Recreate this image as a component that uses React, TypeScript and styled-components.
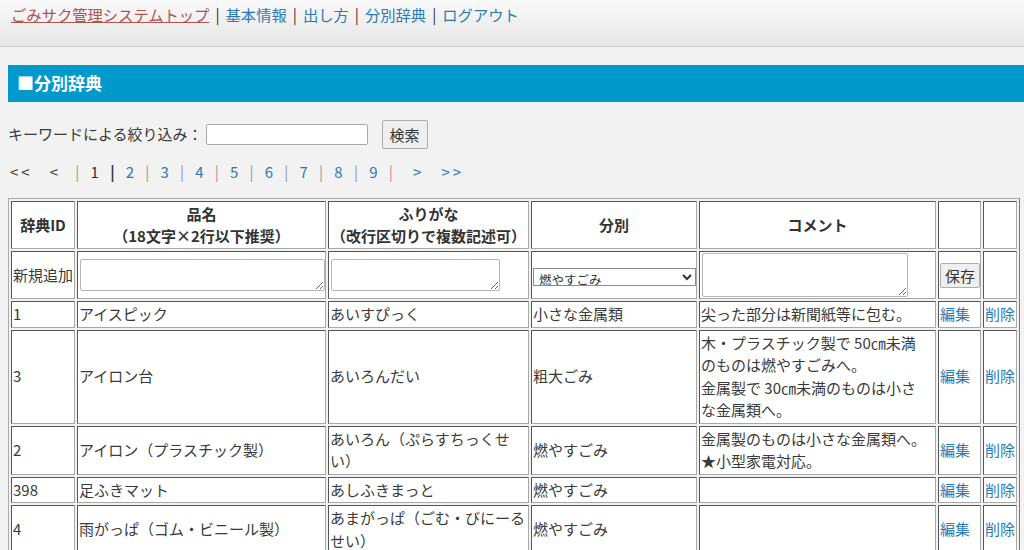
import React from "react";
import styled, { createGlobalStyle } from "styled-components";

const GlobalStyle = createGlobalStyle`
  html, body {
    margin: 0;
    padding: 0;
    overflow: hidden;
    background-color: #f2f2f2;
  }
  body {
    font-family: "Noto Sans CJK JP", "Noto Sans", sans-serif;
    font-size: 15px;
    line-height: 22.5px;
    color: #3a3a3a;
  }
`;

const LINK = "#2a7ab8";

const NavBar = styled.nav`
  height: 47px;
  box-sizing: border-box;
  padding: 3px 0 0 11px;
  background: linear-gradient(#f9f9f9, #e6e6e6);
  border-bottom: 1px solid #cfcfcf;
  display: flex;
  align-items: flex-start;
  font-size: 15.3px;
`;

const NavLink = styled.a<{ $top?: boolean }>`
  color: ${({ $top }) => ($top ? "#b0524e" : LINK)};
  text-decoration: ${({ $top }) => ($top ? "underline" : "none")};
  cursor: pointer;
`;

const NavSep = styled.span`
  margin: 0 6px;
  color: #333;
`;

const Main = styled.main`
  padding-left: 8px;
`;

const Heading = styled.h2`
  margin: 18px 0 0;
  height: 37px;
  padding-left: 9px;
  display: flex;
  align-items: center;
  background-color: #0099cc;
  color: #fff;
  font-size: 17px;
  font-weight: bold;
`;

const SearchRow = styled.form`
  margin-top: 18px;
  height: 29px;
  display: flex;
  align-items: center;
`;

const SearchInput = styled.input`
  margin-left: 3px;
  width: 162px;
  height: 21px;
  box-sizing: border-box;
  border: 1px solid #a9a9a9;
  border-radius: 2px;
  background: #fff;
`;

const Button = styled.button<{ $w: number; $h: number }>`
  width: ${({ $w }) => $w}px;
  height: ${({ $h }) => $h}px;
  padding: 0;
  border: 1px solid #adadad;
  border-radius: 2px;
  background: #efefef;
  color: #333;
  font-family: inherit;
  font-size: 15px;
  line-height: 1;
`;

const SearchButton = styled(Button)`
  margin-left: 14px;
`;

const Pager = styled.div`
  margin-top: 12px;
  height: 22px;
  display: flex;
  align-items: center;
  gap: 11.2px;
  padding-left: 2px;
`;

const PageItem = styled.a<{ $current?: boolean }>`
  color: ${({ $current }) => ($current ? "#333" : LINK)};
  text-decoration: none;
`;

const Arrow = styled.a<{ $dark?: boolean; $gapLeft?: number }>`
  color: ${({ $dark }) => ($dark ? "#444" : LINK)};
  text-decoration: none;
  letter-spacing: 3px;
  margin-left: ${({ $gapLeft }) => $gapLeft ?? 0}px;
`;

const PageSep = styled.span<{ $dark?: boolean; $first?: boolean }>`
  color: ${({ $dark }) => ($dark ? "#333" : "#9a9a9a")};
  font-weight: ${({ $dark }) => ($dark ? "bold" : "normal")};
  margin-left: ${({ $first }) => ($first ? 3 : 0)}px;
`;

const Table = styled.table`
  margin-top: 15px;
  width: 1012px;
  table-layout: fixed;
  border-collapse: separate;
  border-spacing: 2px;
  border: 1px solid;
  border-color: #ababab #7a7a7a #7a7a7a #ababab;
  background: #f2f2f2;
`;

const HeadCell = styled.th<{ $w: number }>`
  width: ${({ $w }) => $w}px;
  box-sizing: border-box;
  padding: 1px;
  background: #fff;
  border: 1px solid;
  border-color: #555 #a8a8a8 #a8a8a8 #555;
  font-weight: bold;
  line-height: 22px;
  text-align: center;
  vertical-align: middle;
  color: #333;
`;

const Cell = styled.td`
  box-sizing: border-box;
  padding: 1px;
  background: #fff;
  border: 1px solid;
  border-color: #555 #a8a8a8 #a8a8a8 #555;
  text-align: left;
  vertical-align: middle;
  overflow: hidden;
`;

const CellLink = styled.a`
  color: ${LINK};
  text-decoration: none;
`;

const TextArea = styled.textarea<{ $w?: number; $h: number; $block?: boolean }>`
  width: ${({ $w }) => ($w ? `${$w}px` : "100%")};
  height: ${({ $h }) => $h}px;
  box-sizing: border-box;
  display: ${({ $block }) => ($block ? "block" : "inline-block")};
  vertical-align: middle;
  margin: 0 0 0 1px;
  border: 1px solid #b4b4b4;
  border-radius: 2px;
  background: #fff;
`;

const Select = styled.select`
  width: 163px;
  height: 18px;
  margin-left: 0;
  padding: 0 0 0 1px;
  vertical-align: middle;
  border: 1px solid #8a8a8a;
  background: #fff;
  color: #333;
  font-family: inherit;
  font-size: 12.5px;
`;

type Entry = {
  id: string;
  name: string;
  yomi: string;
  kind: string;
  comment: React.ReactNode;
};

const entries: Entry[] = [
  {
    id: "1",
    name: "アイスピック",
    yomi: "あいすぴっく",
    kind: "小さな金属類",
    comment: "尖った部分は新聞紙等に包む。",
  },
  {
    id: "3",
    name: "アイロン台",
    yomi: "あいろんだい",
    kind: "粗大ごみ",
    comment: (
      <>
        木・プラスチック製で 50㎝未満
        <br />
        のものは燃やすごみへ。
        <br />
        金属製で 30㎝未満のものは小さ
        <br />
        な金属類へ。
      </>
    ),
  },
  {
    id: "2",
    name: "アイロン（プラスチック製）",
    yomi: "あいろん（ぷらすちっくせい）",
    kind: "燃やすごみ",
    comment: (
      <>
        金属製のものは小さな金属類へ。
        <br />
        ★小型家電対応。
      </>
    ),
  },
  {
    id: "398",
    name: "足ふきマット",
    yomi: "あしふきまっと",
    kind: "燃やすごみ",
    comment: "",
  },
  {
    id: "4",
    name: "雨がっぱ（ゴム・ビニール製）",
    yomi: "あまがっぱ（ごむ・びにーるせい）",
    kind: "燃やすごみ",
    comment: "",
  },
];

const pages = [1, 2, 3, 4, 5, 6, 7, 8, 9];

export default function App() {
  return (
    <>
      <GlobalStyle />
      <NavBar>
        <NavLink $top>ごみサク管理システムトップ</NavLink>
        <NavSep>|</NavSep>
        <NavLink>基本情報</NavLink>
        <NavSep>|</NavSep>
        <NavLink>出し方</NavLink>
        <NavSep>|</NavSep>
        <NavLink>分別辞典</NavLink>
        <NavSep>|</NavSep>
        <NavLink>ログアウト</NavLink>
      </NavBar>
      <Main>
        <Heading>■分別辞典</Heading>
        <SearchRow onSubmit={(e) => e.preventDefault()}>
          <span>キーワードによる絞り込み：</span>
          <SearchInput type="text" />
          <SearchButton $w={46} $h={29}>
            検索
          </SearchButton>
        </SearchRow>
        <Pager>
          <Arrow $dark>&lt;&lt;</Arrow>
          <Arrow $dark $gapLeft={6}>
            &lt;
          </Arrow>
          {pages.map((p) => (
            <React.Fragment key={p}>
              <PageSep $dark={p === 2} $first={p === 1}>
                |
              </PageSep>
              <PageItem $current={p === 1}>{p}</PageItem>
            </React.Fragment>
          ))}
          <PageSep>|</PageSep>
          <Arrow $gapLeft={9}>&gt;</Arrow>
          <Arrow $gapLeft={6}>&gt;&gt;</Arrow>
        </Pager>
        <Table>
          <thead>
            <tr>
              <HeadCell $w={64}>辞典ID</HeadCell>
              <HeadCell $w={249}>
                品名
                <br />
                （18文字×2行以下推奨）
              </HeadCell>
              <HeadCell $w={201}>
                ふりがな
                <br />
                （改行区切りで複数記述可）
              </HeadCell>
              <HeadCell $w={166}>分別</HeadCell>
              <HeadCell $w={237}>コメント</HeadCell>
              <HeadCell $w={43}></HeadCell>
              <HeadCell $w={34}></HeadCell>
            </tr>
          </thead>
          <tbody>
            <tr>
              <Cell>新規追加</Cell>
              <Cell>
                <TextArea $h={32} />
              </Cell>
              <Cell>
                <TextArea $w={169} $h={32} />
              </Cell>
              <Cell>
                <Select defaultValue="燃やすごみ">
                  <option>燃やすごみ</option>
                  <option>小さな金属類</option>
                  <option>粗大ごみ</option>
                </Select>
              </Cell>
              <Cell>
                <TextArea $w={206} $h={44} $block />
              </Cell>
              <Cell>
                <Button $w={40} $h={25}>
                  保存
                </Button>
              </Cell>
              <Cell></Cell>
            </tr>
            {entries.map((e) => (
              <tr key={e.id}>
                <Cell>{e.id}</Cell>
                <Cell>{e.name}</Cell>
                <Cell>{e.yomi}</Cell>
                <Cell>{e.kind}</Cell>
                <Cell>{e.comment}</Cell>
                <Cell>
                  <CellLink>編集</CellLink>
                </Cell>
                <Cell>
                  <CellLink>削除</CellLink>
                </Cell>
              </tr>
            ))}
          </tbody>
        </Table>
      </Main>
    </>
  );
}
